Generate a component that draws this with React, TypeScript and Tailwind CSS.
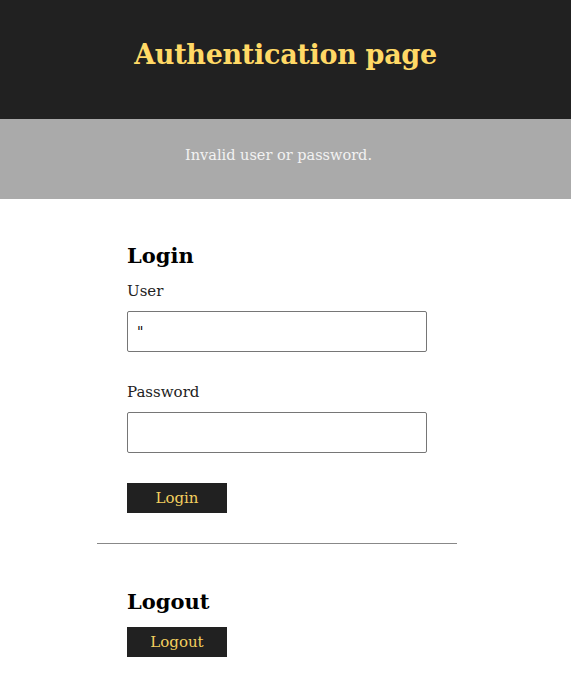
import React from "react";

export default function App() {
  const font = { fontFamily: '"DejaVu Serif", "Liberation Serif", serif' };
  return (
    <div className="min-h-screen bg-white" style={font}>
      <header className="h-[119px] bg-[#212121] flex items-center justify-center">
        <h1 className="text-[27px] font-bold text-[#ffd966] tracking-[-0.3px] -mt-[8px]">Authentication page</h1>
      </header>
      <div className="h-[80px] bg-[#aaaaaa] flex items-center justify-center">
        <p className="text-[14.5px] text-[#f2f2f2] -mt-[7px] -ml-[14px]">Invalid user or password.</p>
      </div>
      <div className="w-[360px] ml-[97px]">
        <section className="pl-[30px] pt-[41px]">
          <h2 className="text-[21px] font-bold text-black leading-[32px]">Login</h2>
          <label className="block text-[15px] text-[#222] mt-[9px] leading-[20px]">User</label>
          <input
            className="block mt-[10px] w-[300px] h-[41px] border border-[#767676] rounded-[2px] px-[9px] text-[14px] text-black outline-none"
            defaultValue={'"'}
          />
          <label className="block text-[15px] text-[#222] mt-[30px] leading-[20px]">Password</label>
          <input
            type="password"
            className="block mt-[10px] w-[300px] h-[41px] border border-[#767676] rounded-[2px] px-[9px] text-[14px] outline-none"
          />
          <button className="block mt-[30px] w-[100px] h-[30px] bg-[#212121] text-[#f3cf5f] text-[15px]">Login</button>
        </section>
        <hr className="mt-[30px] border-0 border-t border-[#888]" />
        <section className="pl-[30px] pt-[42px]">
          <h2 className="text-[21px] font-bold text-black leading-[32px]">Logout</h2>
          <button className="block mt-[9px] w-[100px] h-[30px] bg-[#212121] text-[#f3cf5f] text-[15px]">Logout</button>
        </section>
      </div>
    </div>
  );
}
